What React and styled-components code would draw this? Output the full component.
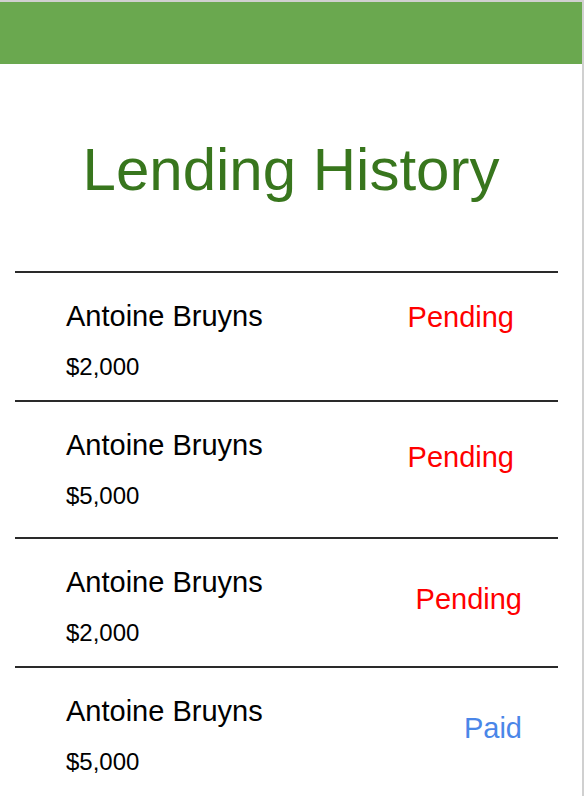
import React from "react";
import styled, { createGlobalStyle } from "styled-components";

const GlobalStyle = createGlobalStyle`
  html, body {
    margin: 0;
    padding: 0;
    background: #ffffff;
  }
  body {
    font-family: "Liberation Sans", Arial, sans-serif;
  }
`;

const Page = styled.div`
  width: 582px;
  min-height: 794px;
  border-top: 2px solid #d0d0d0;
  border-right: 2px solid #d0d0d0;
  background: #ffffff;
`;

const TopBar = styled.header`
  height: 62px;
  background: #6aa84f;
`;

const Title = styled.h1`
  margin: 71px 0 66px;
  font-size: 60px;
  line-height: 70px;
  font-weight: 400;
  color: #38761d;
  text-align: center;
`;

const List = styled.div`
  margin: 0 24px 0 15px;
`;

const Row = styled.div`
  display: flex;
  justify-content: space-between;
  align-items: flex-start;
  border-top: 2px solid #2a2a2a;
  padding: 26px ${({ $right }) => $right}px ${({ $bottom }) => $bottom}px 51px;
`;

const Info = styled.div`
  display: flex;
  flex-direction: column;
  gap: 20px;
`;

const Name = styled.div`
  font-size: 29px;
  line-height: 34px;
  color: #000000;
`;

const Amount = styled.div`
  font-size: 24px;
  line-height: 28px;
  color: #000000;
`;

const Status = styled.div`
  margin-top: ${({ $offset }) => $offset}px;
  font-size: 29px;
  line-height: 34px;
  color: ${({ $paid }) => ($paid ? "#4a86e8" : "#ff0000")};
`;

const loans = [
  { name: "Antoine Bruyns", amount: "$2,000", status: "Pending", offset: 1, right: 44, bottom: 19 },
  { name: "Antoine Bruyns", amount: "$5,000", status: "Pending", offset: 12, right: 44, bottom: 27 },
  { name: "Antoine Bruyns", amount: "$2,000", status: "Pending", offset: 17, right: 36, bottom: 19 },
  { name: "Antoine Bruyns", amount: "$5,000", status: "Paid", offset: 17, right: 36, bottom: 19 },
];

export default function App() {
  return (
    <>
      <GlobalStyle />
      <Page>
        <TopBar />
        <Title>Lending History</Title>
        <List>
          {loans.map((loan, i) => (
            <Row key={i} $right={loan.right} $bottom={loan.bottom}>
              <Info>
                <Name>{loan.name}</Name>
                <Amount>{loan.amount}</Amount>
              </Info>
              <Status $offset={loan.offset} $paid={loan.status === "Paid"}>
                {loan.status}
              </Status>
            </Row>
          ))}
        </List>
      </Page>
    </>
  );
}
